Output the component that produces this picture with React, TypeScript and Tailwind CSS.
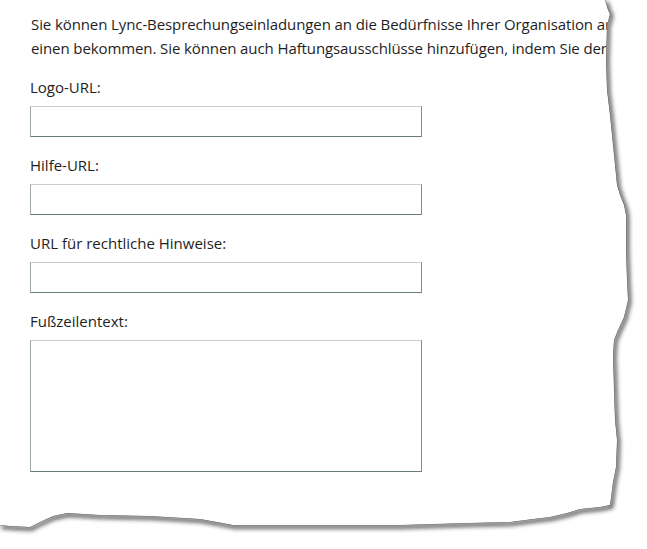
const edge = [
  [605, 0], [608, 10], [610, 14], [607, 25], [606, 60], [607, 90], [610, 115], [612, 135],
  [615, 165], [617, 185], [620, 195], [624, 205], [626, 215], [626, 250], [627, 280], [628, 300],
  [624, 317], [618, 330], [614, 340], [613, 355], [614, 390], [615, 420], [617, 440], [616, 467],
  [613, 482], [611, 498], [610, 505], [600, 507], [580, 509], [567, 513], [550, 517], [533, 519],
  [510, 522], [467, 523], [400, 525], [233, 525], [217, 522], [200, 519], [150, 516], [100, 515],
  [67, 513], [53, 516], [40, 522], [30, 527], [10, 526], [0, 525],
];

const edgePoints = edge.map(([x, y]) => `${x},${y}`).join(" ");
const outside = `M0 0 H647 V549 H0 Z M${edge.map(([x, y]) => `${x} ${y}`).join(" L")} L0 0 Z`;

const Field = ({ label, area }: { label: string; area?: boolean }) => (
  <div className="mt-[16px] first:mt-0">
    <div className="h-[24px] leading-[24px] mb-[7px]">{label}</div>
    <div
      className={`w-[392px] ${area ? "h-[132px]" : "h-[31px]"} bg-white border border-t-[#c8cece] border-l-[#9ea8a8] border-r-[#7f8f8f] border-b-[#6c7b7b]`}
    />
  </div>
);

// torn paper edge: white outside the sheet, soft shadow along the tear
const TornEdge = () => (
  <svg className="absolute inset-0 pointer-events-none" width="647" height="549">
    <defs>
      <filter id="blur" x="-10%" y="-10%" width="120%" height="120%">
        <feGaussianBlur stdDeviation="2.2" />
      </filter>
      <clipPath id="out">
        <path d={outside} clipRule="evenodd" />
      </clipPath>
    </defs>
    <path d={outside} fill="#fff" fillRule="evenodd" />
    <g clipPath="url(#out)">
      <polyline
        points={edgePoints}
        fill="none"
        stroke="#2e2e2e"
        strokeWidth="3"
        transform="translate(1.5,2)"
        filter="url(#blur)"
      />
      <polyline points={edgePoints} fill="none" stroke="#6a6a6a" strokeWidth="1.2" />
    </g>
  </svg>
);

export default function App() {
  return (
    <div className="relative w-[647px] h-[549px] bg-white overflow-hidden text-[15px] text-[#1e1e1e] font-['Open_Sans',sans-serif]">
      <div className="pl-[31px] pt-[12px] whitespace-nowrap tracking-[-0.1px]">
        <div className="leading-[24px]">
          Sie können Lync-Besprechungseinladungen an die Bedürfnisse Ihrer Organisation an
        </div>
        <div className="leading-[24px]">
          einen bekommen. Sie können auch Haftungsausschlüsse hinzufügen, indem Sie den
        </div>
      </div>
      <div className="pl-[30px] mt-[15px]">
        <Field label="Logo-URL:" />
        <Field label="Hilfe-URL:" />
        <Field label="URL für rechtliche Hinweise:" />
        <Field label="Fußzeilentext:" area />
      </div>
      <TornEdge />
    </div>
  );
}
